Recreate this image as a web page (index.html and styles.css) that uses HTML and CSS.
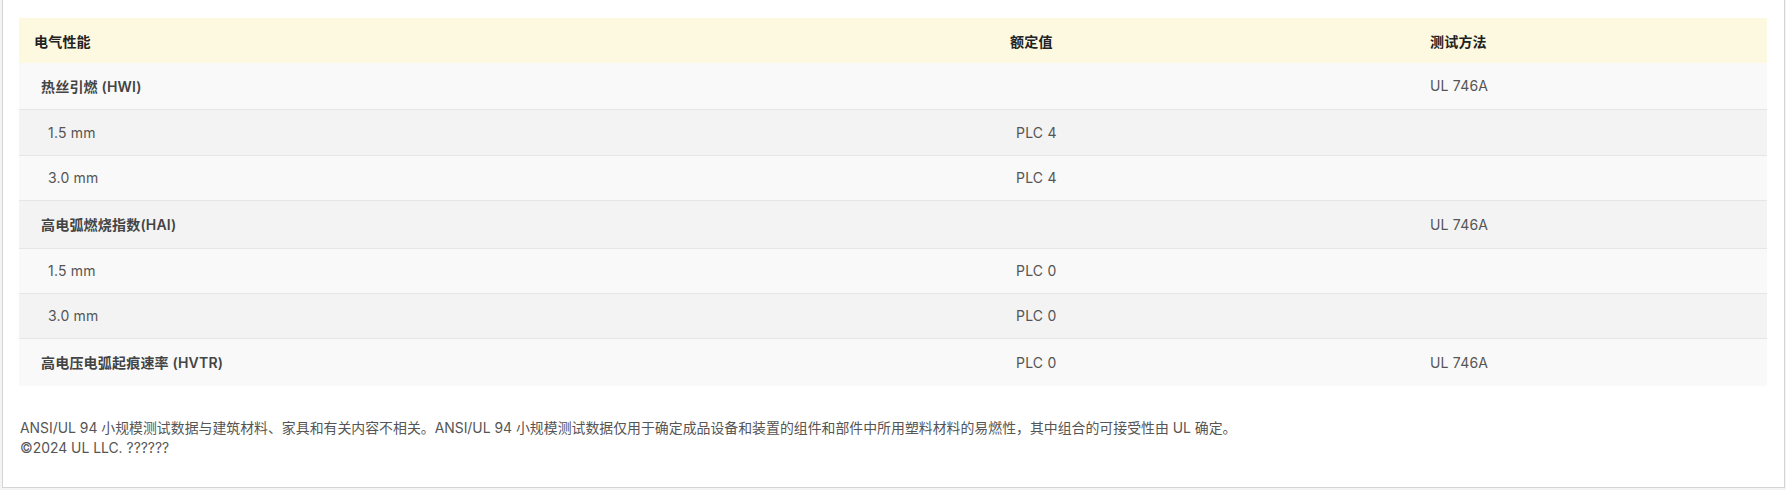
FILE: index.html
```html
<!DOCTYPE html>
<html lang="zh-CN">
<head>
  <meta charset="UTF-8">
  <title>电气性能</title>
  <link rel="stylesheet" href="styles.css">
</head>
<body>
<div class="panel">
  <!-- 电气性能表 -->
  <table class="props">
    <colgroup>
      <col class="c-name">
      <col class="c-val">
      <col class="c-test">
    </colgroup>
    <thead>
      <tr>
        <th>电气性能</th>
        <th>额定值</th>
        <th>测试方法</th>
      </tr>
    </thead>
    <tbody>
      <tr class="group">
        <td>热丝引燃 (HWI)</td>
        <td></td>
        <td>UL 746A</td>
      </tr>
      <tr class="sub">
        <td>1.5 mm</td>
        <td>PLC 4</td>
        <td></td>
      </tr>
      <tr class="sub">
        <td>3.0 mm</td>
        <td>PLC 4</td>
        <td></td>
      </tr>
      <tr class="group">
        <td>高电弧燃烧指数(HAI)</td>
        <td></td>
        <td>UL 746A</td>
      </tr>
      <tr class="sub">
        <td>1.5 mm</td>
        <td>PLC 0</td>
        <td></td>
      </tr>
      <tr class="sub">
        <td>3.0 mm</td>
        <td>PLC 0</td>
        <td></td>
      </tr>
      <tr class="group">
        <td>高电压电弧起痕速率 (HVTR)</td>
        <td>PLC 0</td>
        <td>UL 746A</td>
      </tr>
    </tbody>
  </table>

  <!-- 底部说明 -->
  <div class="note">
    <p>ANSI/UL 94 小规模测试数据与建筑材料、家具和有关内容不相关。ANSI/UL 94 小规模测试数据仅用于确定成品设备和装置的组件和部件中所用塑料材料的易燃性，其中组合的可接受性由 UL 确定。</p>
    <p>©2024 UL LLC. ??????</p>
  </div>
</div>
</body>
</html>
```

FILE: styles.css
```css
* {
  padding: 0;
  margin: 0;
  box-sizing: border-box;
}

body {
  background: #f4f4f4;
  font-family: Inter, "Noto Sans CJK SC", sans-serif;
  font-size: 14px;
  color: #555;
}

.panel {
  width: 1783px;
  height: 488px;
  margin-left: 2px;
  padding: 18px 16px 0 16px;
  background: #fff;
  border: 1px solid #d4d4d4;
  border-top: 0;
}

.props {
  width: 1748px;
  border-collapse: collapse;
  table-layout: fixed;
  letter-spacing: 0.2px;
}

.props .c-name {
  width: 976px;
}

.props .c-val {
  width: 420px;
}

.props th {
  height: 45px;
  padding-left: 15px;
  text-align: left;
  font-weight: 600;
  color: #222;
  background: #fdf8e0;
}

.props td {
  padding-left: 21px;
  border-top: 1px solid #e6e6e6;
}

.props td:last-child {
  padding-left: 15px;
}

.props tbody tr:nth-child(odd) {
  background: #f9f9f9;
}

.props tbody tr:nth-child(even) {
  background: #f3f3f3;
}

.props tbody tr:first-child td {
  border-top: 0;
  height: 46px;
}

.props .group td {
  height: 48px;
}

.props .group td:first-child {
  padding-left: 22px;
  font-weight: 600;
  color: #444;
}

.props .sub td {
  height: 45px;
}

.props tbody tr:nth-child(2) td {
  height: 46px;
}

.props .sub td:first-child {
  padding-left: 29px;
}

.note {
  margin-top: 32px;
  padding-left: 1px;
  font-size: 13.9px;
  line-height: 20px;
  color: #555;
}
```
